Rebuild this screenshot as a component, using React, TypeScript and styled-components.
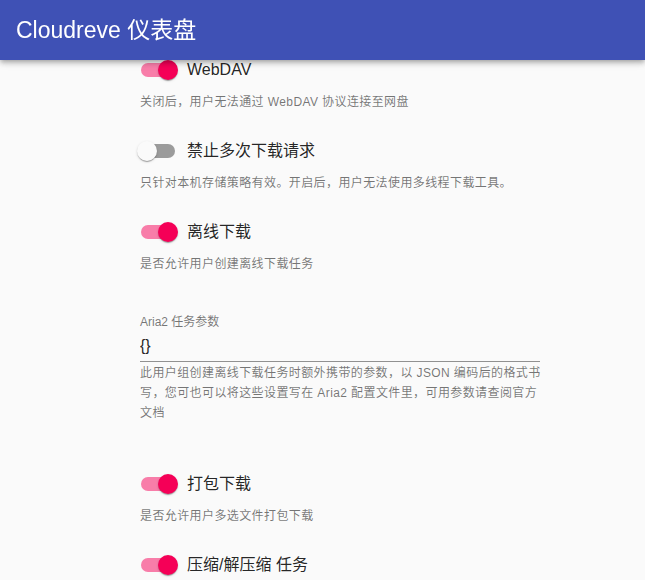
import React from "react";
import styled, { createGlobalStyle } from "styled-components";

const GlobalStyle = createGlobalStyle`
  html, body {
    margin: 0;
    padding: 0;
    background: #fafafa;
    font-family: "Liberation Sans", Arial, "Noto Sans CJK SC", sans-serif;
    -webkit-font-smoothing: antialiased;
  }
  * { box-sizing: border-box; }
`;

const AppBar = styled.header`
  position: fixed;
  top: 0;
  left: 0;
  right: 0;
  z-index: 10;
  height: 60px;
  display: flex;
  align-items: center;
  padding: 0 16px;
  background: #3f51b5;
  box-shadow: 0px 2px 4px -1px rgba(0, 0, 0, 0.2),
    0px 4px 5px 0px rgba(0, 0, 0, 0.14), 0px 1px 10px 0px rgba(0, 0, 0, 0.12);
`;

const Title = styled.div`
  font-size: 23px;
  font-weight: 400;
  line-height: 32px;
  color: #fff;
`;

const Main = styled.main`
  padding: 51px 0 0 140px;
`;

const Form = styled.div`
  width: 400px;
  display: flex;
  flex-direction: column;
`;

const Setting = styled.div<{ $gap: number }>`
  margin-top: ${(p) => p.$gap}px;
`;

const SwitchRow = styled.label`
  display: flex;
  align-items: center;
  height: 38px;
  margin-left: -11px;
  cursor: pointer;
`;

const SwitchRoot = styled.span`
  position: relative;
  flex: none;
  width: 58px;
  height: 38px;
  padding: 12px;
`;

const Track = styled.span<{ $on: boolean }>`
  display: block;
  width: 34px;
  height: 14px;
  border-radius: 7px;
  background: ${(p) => (p.$on ? "#f50057" : "#000")};
  opacity: ${(p) => (p.$on ? 0.5 : 0.38)};
`;

const Thumb = styled.span<{ $on: boolean }>`
  position: absolute;
  top: 9px;
  left: ${(p) => (p.$on ? 29 : 8)}px;
  width: 20px;
  height: 20px;
  border-radius: 50%;
  background: ${(p) => (p.$on ? "#f50057" : "#fafafa")};
  box-shadow: 0px 2px 1px -1px rgba(0, 0, 0, 0.2),
    0px 1px 1px 0px rgba(0, 0, 0, 0.14), 0px 1px 3px 0px rgba(0, 0, 0, 0.12);
`;

const SwitchLabel = styled.span`
  font-size: 16px;
  line-height: 24px;
  color: rgba(0, 0, 0, 0.87);
`;

const Helper = styled.p<{ $top?: number }>`
  margin: ${(p) => p.$top ?? 3}px 0 0;
  font-size: 12px;
  line-height: 20px;
  letter-spacing: 0.4px;
  color: rgba(0, 0, 0, 0.54);
`;

const HelperLine = styled.span`
  display: block;
  white-space: nowrap;
`;

const FieldLabel = styled.label`
  display: block;
  font-size: 12px;
  line-height: 16px;
  height: 16px;
  color: rgba(0, 0, 0, 0.54);
`;

const InputBox = styled.div`
  border-bottom: 1px solid rgba(0, 0, 0, 0.42);
`;

const Input = styled.input`
  display: block;
  width: 100%;
  border: 0;
  outline: none;
  background: transparent;
  padding: 6px 0 6px;
  height: 31px;
  font-family: inherit;
  font-size: 16px;
  line-height: 19px;
  color: rgba(0, 0, 0, 0.87);
`;

type ToggleProps = { on: boolean; label: string; help: string; gap: number };

function ToggleSetting({ on, label, help, gap }: ToggleProps) {
  return (
    <Setting $gap={gap}>
      <SwitchRow>
        <SwitchRoot>
          <Track $on={on} />
          <Thumb $on={on} />
        </SwitchRoot>
        <SwitchLabel>{label}</SwitchLabel>
      </SwitchRow>
      <Helper>{help}</Helper>
    </Setting>
  );
}

const aria2Help = [
  "此用户组创建离线下载任务时额外携带的参数，以 JSON 编码后的格式书",
  "写，您可也可以将这些设置写在 Aria2 配置文件里，可用参数请查阅官方",
  "文档",
];

export default function App() {
  return (
    <>
      <GlobalStyle />
      <AppBar>
        <Title>Cloudreve 仪表盘</Title>
      </AppBar>
      <Main>
        <Form>
          <ToggleSetting
            gap={0}
            on
            label="WebDAV"
            help="关闭后，用户无法通过 WebDAV 协议连接至网盘"
          />
          <ToggleSetting
            gap={20}
            on={false}
            label="禁止多次下载请求"
            help="只针对本机存储策略有效。开启后，用户无法使用多线程下载工具。"
          />
          <ToggleSetting
            gap={20}
            on
            label="离线下载"
            help="是否允许用户创建离线下载任务"
          />
          <Setting $gap={40}>
            <FieldLabel htmlFor="aria2">Aria2 任务参数</FieldLabel>
            <InputBox>
              <Input id="aria2" defaultValue="{}" />
            </InputBox>
            <Helper $top={1}>
              {aria2Help.map((line) => (
                <HelperLine key={line}>{line}</HelperLine>
              ))}
            </Helper>
          </Setting>
          <ToggleSetting
            gap={42}
            on
            label="打包下载"
            help="是否允许用户多选文件打包下载"
          />
          <ToggleSetting
            gap={20}
            on
            label="压缩/解压缩 任务"
            help="是否允许用户创建压缩/解压缩任务"
          />
        </Form>
      </Main>
    </>
  );
}
